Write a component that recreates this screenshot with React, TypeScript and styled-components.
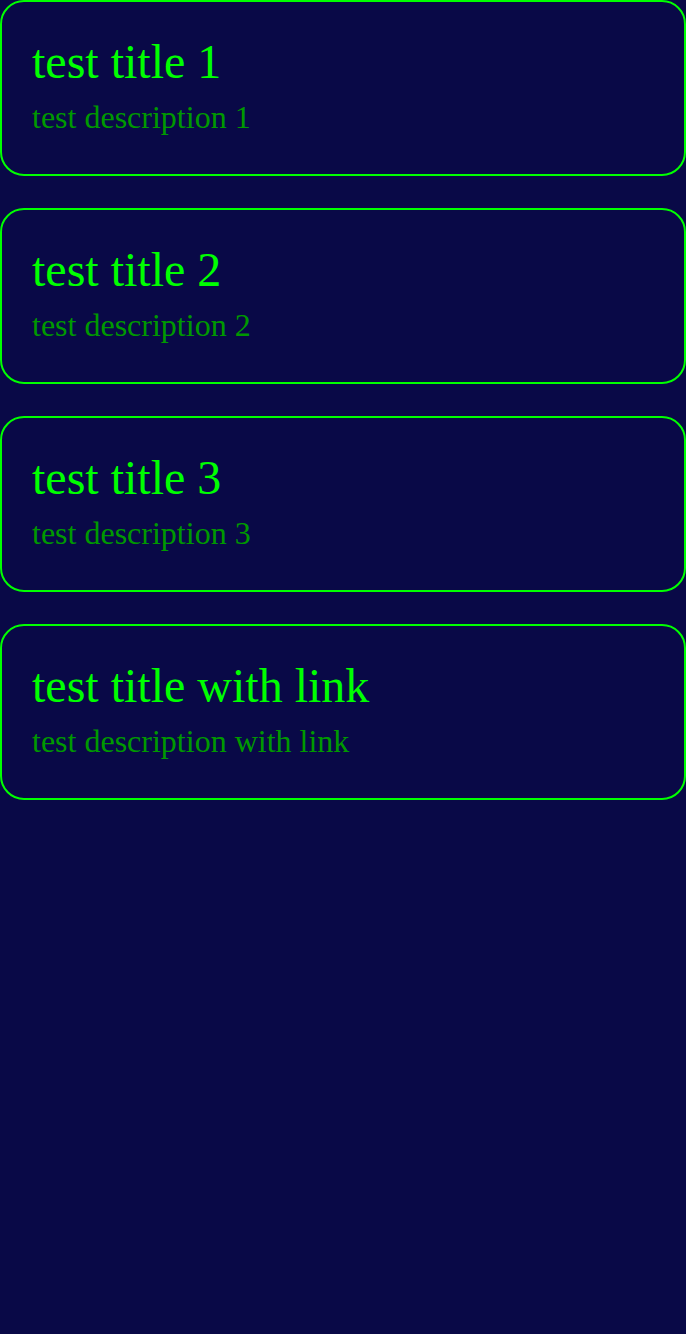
import React from "react";
import styled, { createGlobalStyle } from "styled-components";

const GlobalStyle = createGlobalStyle`
  * {
    box-sizing: border-box;
  }

  body {
    margin: 0;
    background: #090947;
    font-family: "Liberation Serif", "Times New Roman", serif;
  }
`;

const CardList = styled.ul`
  display: flex;
  flex-direction: column;
  gap: 32px;
  margin: 0;
  padding: 0;
  list-style: none;
`;

const Card = styled.li`
  padding: 30px 30px 38px;
  border: 2px solid #00ff00;
  border-radius: 24px;
`;

const CardLink = styled.a`
  display: block;
  color: inherit;
  text-decoration: none;
`;

const Title = styled.h2`
  margin: 0 0 6px;
  color: #00ff00;
  font-size: 48px;
  font-weight: 400;
  line-height: 60px;
`;

const Description = styled.p`
  margin: 0;
  color: #009900;
  font-size: 32px;
  line-height: 38px;
`;

interface Item {
  title: string;
  description: string;
  href?: string;
}

const items: Item[] = [
  { title: "test title 1", description: "test description 1" },
  { title: "test title 2", description: "test description 2" },
  { title: "test title 3", description: "test description 3" },
  {
    title: "test title with link",
    description: "test description with link",
    href: "#link",
  },
];

function CardContent({ title, description }: Item) {
  return (
    <>
      <Title>{title}</Title>
      <Description>{description}</Description>
    </>
  );
}

export default function App() {
  return (
    <main>
      <GlobalStyle />
      <CardList>
        {items.map((item) => (
          <Card key={item.title}>
            {item.href ? (
              <CardLink href={item.href}>
                <CardContent {...item} />
              </CardLink>
            ) : (
              <CardContent {...item} />
            )}
          </Card>
        ))}
      </CardList>
    </main>
  );
}
